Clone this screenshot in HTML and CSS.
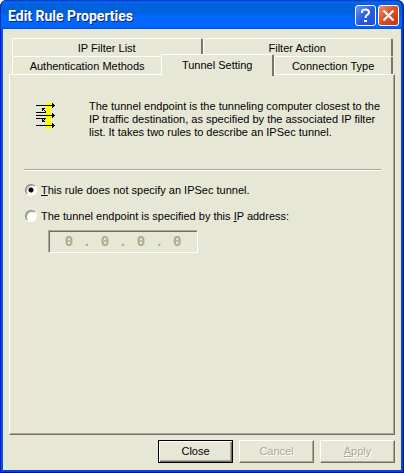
FILE: index.html
```html
<!DOCTYPE html>
<html lang="en">
<head>
  <meta charset="UTF-8">
  <meta name="viewport" content="width=device-width, initial-scale=1.0">
  <title>Edit Rule Properties</title>
  <link rel="stylesheet" href="styles.css">
</head>
<body>
  <div class="window">
    <header class="titlebar">
      <h1>Edit Rule Properties</h1>
      <button type="button" class="caption-btn help" aria-label="Help">
        <svg width="19" height="19" viewBox="0 0 19 19">
          <path d="M6 7V5.500Q6.500 3.500 9.500 3.500Q13 3.500 13 6.500Q13 8 11 9Q9.500 10 9.500 12" fill="none" stroke="#fff" stroke-width="2"/>
          <rect x="8" y="14" width="3" height="2" fill="#fff"/>
        </svg>
      </button>
      <button type="button" class="caption-btn close" aria-label="Close window">
        <svg width="19" height="19" viewBox="0 0 19 19">
          <path d="M4.500 4.500L14.500 14.500M14.500 4.500L4.500 14.500" stroke="#fff" stroke-width="2.200"/>
        </svg>
      </button>
    </header>

    <form class="content">
      <div class="tabs" role="tablist">
        <div class="tab-row">
          <button type="button" class="tab" role="tab">IP Filter List</button>
          <button type="button" class="tab" role="tab">Filter Action</button>
        </div>
        <div class="tab-row">
          <button type="button" class="tab wide" role="tab">Authentication Methods</button>
          <button type="button" class="tab active" role="tab" aria-selected="true">Tunnel Setting</button>
          <button type="button" class="tab narrow" role="tab">Connection Type</button>
        </div>
      </div>

      <section class="panel" role="tabpanel">
        <div class="intro">
          <svg class="intro-icon" width="20" height="28" viewBox="0 0 20 28" shape-rendering="crispEdges">
            <rect x="10" y="0" width="5" height="27" fill="#ff0"/>
            <path d="M0 3h17v1H0zM0 10h10v1H0zM0 13h17v1H0zM0 16h10v1H0zM0 23h17v1H0z"/>
            <path d="M16 1h1v1h1v1h1v1h-1v1h-1v1h-1zM16 11h1v1h1v1h1v1h-1v1h-1v1h-1zM16 21h1v1h1v1h1v1h-1v1h-1v1h-1z"/>
            <path d="M6 6h3v1H7v2H6zM7 7h1v1H7zM8 8h1v1H8zM9 9h1v1H9zM6 20h3v-1H7v-2H6zM7 18h1v1H7zM8 17h1v1H8zM9 16h1v1H9z"/>
          </svg>
          <p>The tunnel endpoint is the tunneling computer closest to the IP traffic destination, as specified by the associated IP filter list. It takes two rules to describe an IPSec tunnel.</p>
        </div>
        <hr>
        <label class="choice">
          <input type="radio" name="tunnel" checked>
          <span><u>T</u>his rule does not specify an IPSec tunnel.</span>
        </label>
        <label class="choice">
          <input type="radio" name="tunnel">
          <span>The tunnel endpoint is specified by this <u>I</u>P address:</span>
        </label>
        <div class="ip-field" role="group" aria-label="IP address">
          <input type="text" value="0" aria-label="First octet" disabled>
          <span>.</span>
          <input type="text" value="0" aria-label="Second octet" disabled>
          <span>.</span>
          <input type="text" value="0" aria-label="Third octet" disabled>
          <span>.</span>
          <input type="text" value="0" aria-label="Fourth octet" disabled>
        </div>
      </section>

      <footer class="actions">
        <button type="button" class="btn default">Close</button>
        <button type="button" class="btn" disabled>Cancel</button>
        <button type="button" class="btn" disabled><u>A</u>pply</button>
      </footer>
    </form>
  </div>
</body>
</html>
```
FILE: styles.css
```css
* {
  box-sizing: border-box;
}

body {
  margin: 0;
  background: #fff;
  color: #000;
  font: 11px/13px "Liberation Sans", Arial, sans-serif;
}

button,
input {
  font: inherit;
  color: inherit;
}

.window {
  display: flex;
  flex-direction: column;
  min-height: 100vh;
  padding: 0 3px 3px;
  background: #e7e7d6;
  border-radius: 7px 7px 0 0;
  box-shadow: inset 1px 0 #0019cf, inset -1px -1px #00138c, inset 3px 0 #0055e5, inset -3px -3px #0045d6;
}

/* title bar */
.titlebar {
  display: flex;
  align-items: center;
  gap: 2px;
  height: 29px;
  margin: 0 -3px;
  padding: 2px 5px 0 8px;
  border-radius: 7px 7px 0 0;
  background: linear-gradient(#0040c8 0, #0040c8 1px, #0a6cf8 2px, #0060e0 4px, #0062d6 12px, #0066ff 16px, #0066ff 27px, #004fd8 29px);
  box-shadow: inset 1px 0 #0030c0, inset -2px 0 #0030b0;
}

.titlebar h1 {
  flex: 1;
  margin: 0;
  color: #fff;
  font: bold 14px/18px Roboto, sans-serif;
  text-shadow: 1px 1px #00207c;
}

.caption-btn {
  width: 21px;
  height: 21px;
  padding: 0;
  border: 1px solid #fff;
  border-radius: 3px;
}

.caption-btn svg {
  display: block;
}

.help {
  background: linear-gradient(135deg, #6c98f4, #2a5ce0 50%, #1c50d8);
}

.close {
  background: linear-gradient(135deg, #ee9070, #dc4c24 50%, #c03a14);
}

.content {
  flex: 1;
  display: flex;
  flex-direction: column;
  padding: 9px 6px 7px;
}

/* tabs */
.tabs {
  padding: 0 2px 0 3px;
}

.tab-row {
  display: flex;
  height: 18px;
}

.tab {
  flex: 1;
  height: 18px;
  padding: 2px 0 0;
  border: 1px solid #fff;
  border-right: 2px solid #777769;
  border-bottom: 0;
  border-radius: 2px 2px 0 0;
  background: #e7e7d6;
  white-space: nowrap;
}

.tab.wide {
  flex: 151;
  border-right: 0;
}

.tab.active {
  flex: 112;
  position: relative;
  height: 22px;
  margin-top: -2px;
  padding-bottom: 2px;
}

.tab.narrow {
  flex: 118;
}

.panel {
  flex: 1;
  padding: 25px 13px 16px 14px;
  border: 1px solid;
  border-color: #fff #6f6f66 #6f6f66 #fff;
  box-shadow: inset -1px -1px #aca899;
}

.intro {
  display: flex;
  gap: 33px;
  padding-left: 12px;
}

.intro-icon {
  flex: none;
  margin-top: 2px;
}

.intro p {
  flex: 1;
  margin: 0;
}

hr {
  height: 2px;
  margin: 30px 0 12px;
  border: 0;
  border-top: 1px solid #aca899;
  border-bottom: 1px solid #fff;
}

.choice {
  display: flex;
  align-items: center;
  gap: 4px;
  height: 14px;
  margin-bottom: 12px;
  padding-left: 1px;
}

.choice input {
  appearance: none;
  width: 12px;
  height: 12px;
  margin: 0;
  border: 1px solid;
  border-color: #85857a #fff #fff #85857a;
  border-radius: 50%;
  background: #fff;
  box-shadow: inset 1px 1px #aca899;
}

.choice input:checked {
  background: radial-gradient(circle, #000 2px, #fff 3px);
}

.ip-field {
  display: flex;
  align-items: center;
  width: 150px;
  height: 23px;
  margin: -5px 0 0 24px;
  padding: 0 6px;
  border: 1px solid;
  border-color: #aca899 #fff #fff #aca899;
  box-shadow: inset 1px 1px #6f6f66;
  color: #aca88f;
  font: bold 14px/16px "Liberation Mono", monospace;
}

.ip-field input {
  flex: 1;
  min-width: 0;
  padding: 0;
  border: 0;
  background: none;
  text-align: center;
}

/* buttons */
.actions {
  display: flex;
  justify-content: flex-end;
  gap: 6px;
  margin-top: 5px;
}

.btn {
  width: 75px;
  height: 23px;
  padding: 0;
  border: 1px solid;
  border-color: #fff #6f6f66 #6f6f66 #fff;
  background: #e7e7d6;
  box-shadow: inset -1px -1px #aca899;
}

.btn.default {
  border-color: #000;
  box-shadow: inset 1px 1px #fff, inset -1px -1px #6f6f66, inset -2px -2px #aca899;
}

.btn:disabled {
  color: #aca899;
  text-shadow: 1px 1px #fff;
}
```
